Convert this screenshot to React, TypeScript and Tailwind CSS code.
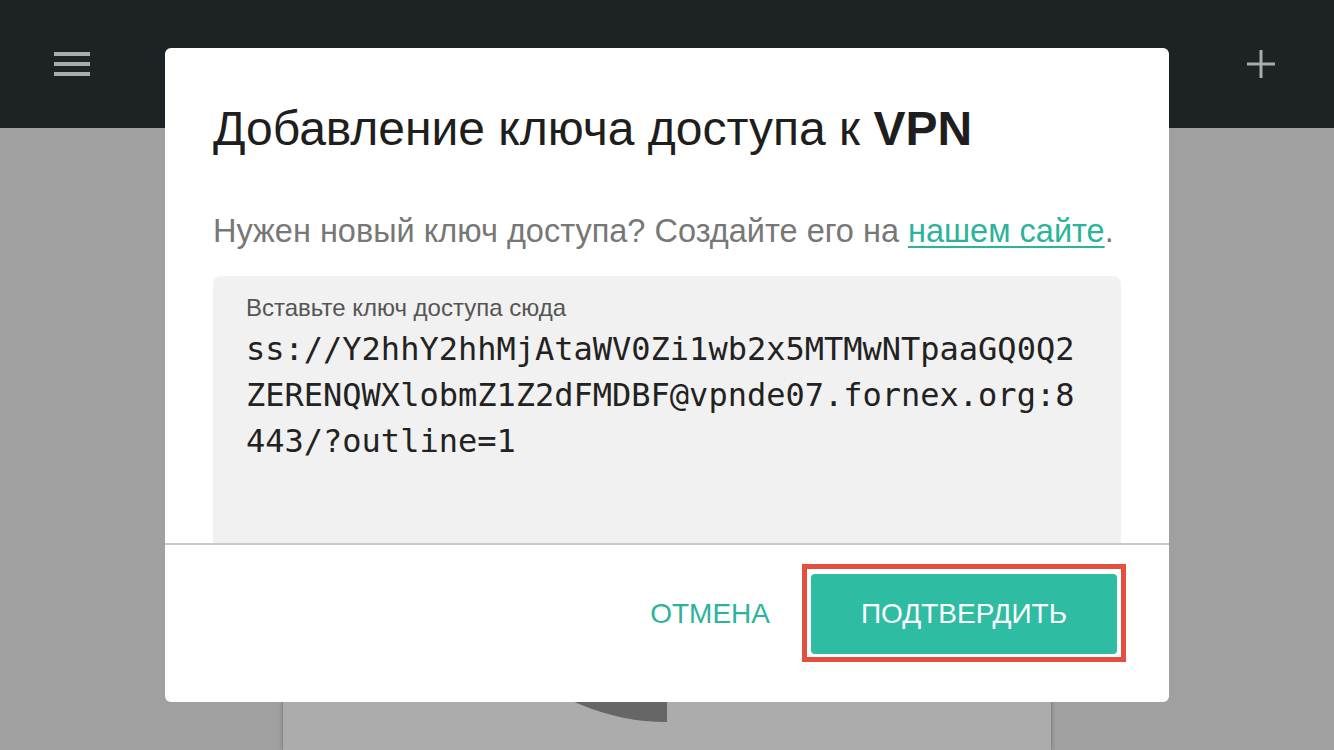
import React from "react";

export default function App() {
  const sans = { fontFamily: '"Liberation Sans", Arial, sans-serif' } as React.CSSProperties;
  return (
    <div className="relative w-[1334px] h-[750px] overflow-hidden bg-[#a0a0a0]" style={sans}>
      {/* header */}
      <div className="h-[128px] bg-[#1d2224] flex items-center justify-between pl-[54px] pr-[59px]">
        <div className="flex flex-col gap-[6px] w-[36px]">
          <div className="h-[4px] bg-[#a9acad]" />
          <div className="h-[4px] bg-[#a9acad]" />
          <div className="h-[4px] bg-[#a9acad]" />
        </div>
        <div className="text-[40px] text-[#a9acad] font-bold leading-none pt-[10px]">Outline</div>
        <svg width="28" height="28" viewBox="0 0 28 28">
          <rect x="12.5" y="0" width="3" height="28" fill="#a9acad" />
          <rect x="0" y="12.5" width="28" height="3" fill="#a9acad" />
        </svg>
      </div>
      {/* card behind */}
      <div className="flex justify-center h-[622px]">
        <div className="w-[768px] h-full bg-[#acacac] shadow-[0_0_4px_rgba(0,0,0,0.35)] flex justify-center">
          <svg width="450" height="450" viewBox="0 0 450 450" className="mt-[144px]">
            <path d="M225 0 A225 225 0 0 0 225 450 Z" fill="#666666" />
          </svg>
        </div>
      </div>

      {/* dialog */}
      <div className="absolute left-[165px] top-[48px] w-[1004px] h-[654px] bg-white rounded-[6px] flex flex-col overflow-hidden">
        <div className="h-[495px] px-[48px] pt-[54px] overflow-hidden flex flex-col">
          <h1 className="text-[48px] leading-[53px] text-[#1e1e1e] whitespace-nowrap">
            Добавление ключа доступа к <span className="font-semibold">VPN</span>
          </h1>
          <p className="mt-[58px] text-[32.5px] leading-[36px] text-[#777777] whitespace-nowrap">
            Нужен новый ключ доступа? Создайте его на{" "}
            <span className="text-[#2bb39b] underline underline-offset-[4px] decoration-[2px]">нашем сайте</span>.
          </p>
          <div className="mt-[27px] bg-[#f1f1f1] rounded-t-[8px] pl-[33px] pt-[19px] h-[320px]">
            <div className="text-[24px] leading-[26px] text-[#555555]">Вставьте ключ доступа сюда</div>
            <div
              className="text-[32px] leading-[46px] text-[#222222] mt-[5px]"
              style={{ fontFamily: '"DejaVu Sans Mono", monospace' }}
            >
              <div>ss://Y2hhY2hhMjAtaWV0Zi1wb2x5MTMwNTpaaGQ0Q2</div>
              <div>ZERENQWXlobmZ1Z2dFMDBF@vpnde07.fornex.org:8</div>
              <div>443/?outline=1</div>
            </div>
          </div>
        </div>
        <div className="h-[2px] bg-[#c9c9cd]" />
        <div className="flex-1 flex items-start justify-end pr-[43px] pt-[19px]">
          <button className="mt-[34px] mr-[32px] text-[28px] leading-[32px] text-[#2bb39b]">ОТМЕНА</button>
          <div className="border-[5px] border-[#e2513f] px-[4px] pt-[5px] pb-[3px]">
            <button className="w-[306px] h-[80px] rounded-[4px] bg-[#2ebca2] text-white text-[28px]">
              ПОДТВЕРДИТЬ
            </button>
          </div>
        </div>
      </div>
    </div>
  );
}
